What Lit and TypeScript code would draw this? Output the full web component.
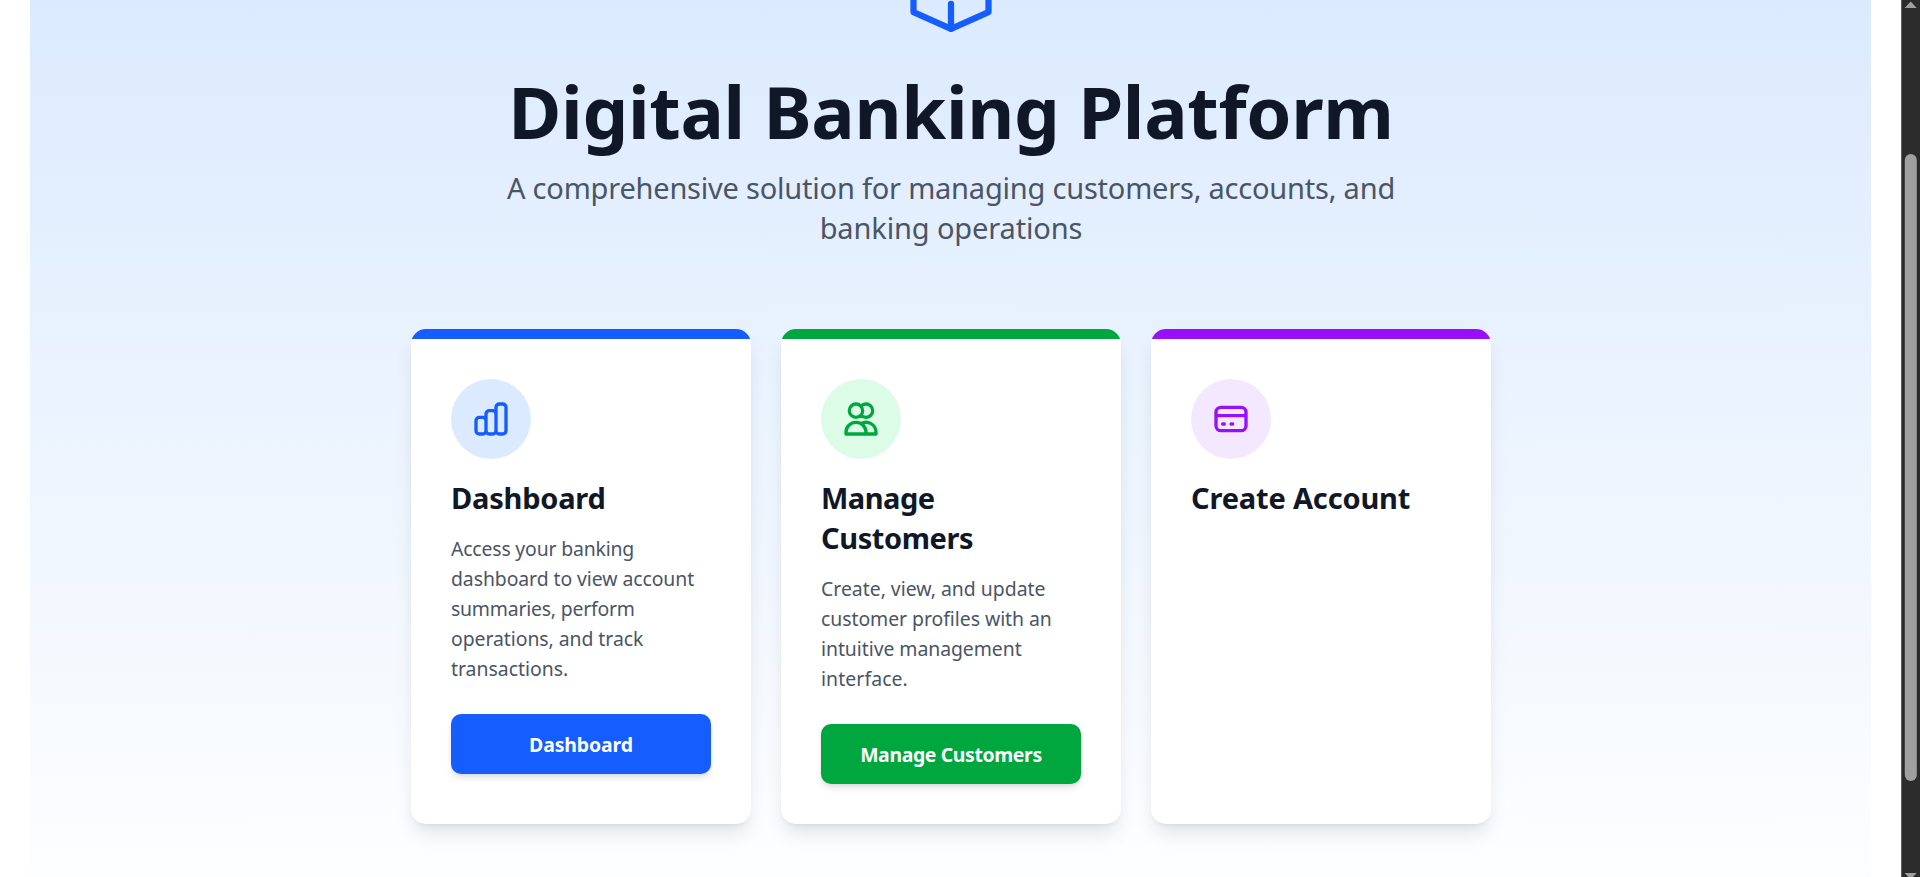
import { LitElement, html, css, svg } from 'lit';
import { customElement, property } from 'lit/decorators.js';

type Line = [text: string, spacing?: number];

interface Feature {
  tone: string;
  icon: string;
  title: Line[];
  body: Line[];
  action?: Line;
}

const ICONS: Record<string, string> = {
  chart:
    'M9 19v-6a2 2 0 00-2-2H5a2 2 0 00-2 2v6a2 2 0 002 2h2a2 2 0 002-2zm0 0V9a2 2 0 012-2h2a2 2 0 012 2v10m-6 0a2 2 0 002 2h2a2 2 0 002-2m0 0V5a2 2 0 012-2h2a2 2 0 012 2v14a2 2 0 01-2 2h-2a2 2 0 01-2-2z',
  users:
    'M12 4.354a4 4 0 110 5.292M15 21H3v-1a6 6 0 0112 0v1zm0 0h6v-1a6 6 0 00-9-5.197M13 7a4 4 0 11-8 0 4 4 0 018 0z',
  card: 'M3 10h18M7 15h1m4 0h1m-7 4h12a3 3 0 003-3V8a3 3 0 00-3-3H6a3 3 0 00-3 3v8a3 3 0 003 3z',
};

const FEATURES: Feature[] = [
  {
    tone: 'blue',
    icon: 'chart',
    title: [['Dashboard', -0.22]],
    body: [
      ['Access your banking', -0.17],
      ['dashboard to view account', -0.07],
      ['summaries, perform', -0.2],
      ['operations, and track', -0.05],
      ['transactions.'],
    ],
    action: ['Dashboard', -0.1],
  },
  {
    tone: 'green',
    icon: 'users',
    title: [['Manage', -0.5], ['Customers', -0.4]],
    body: [
      ['Create, view, and update'],
      ['customer profiles with an', -0.04],
      ['intuitive management', -0.05],
      ['interface.', 0.1],
    ],
    action: ['Manage Customers', -0.35],
  },
  {
    tone: 'purple',
    icon: 'card',
    title: [['Create Account', -0.17]],
    body: [],
  },
];

const line = ([text, spacing = 0]: Line) =>
  html`<span class="line" style="letter-spacing:${spacing}px">${text}</span>`;

@customElement('feature-card')
class FeatureCard extends LitElement {
  @property({ attribute: false }) feature!: Feature;

  static styles = css`
    :host { display: block; }
    .card {
      box-sizing: border-box;
      height: 100%;
      background: #fff;
      border-radius: 15px;
      overflow: hidden;
      box-shadow: 0 12.5px 18.75px -3.75px rgb(0 0 0 / 0.1), 0 5px 7.5px -5px rgb(0 0 0 / 0.1);
    }
    .blue { --main: #155dfc; --soft: #dbeafe; }
    .green { --main: #00a63e; --soft: #dcfce7; }
    .purple { --main: #9810fa; --soft: #f3e8ff; }
    .bar { height: 10px; background: var(--main); }
    .content { padding: 40px; }
    .badge {
      width: 80px;
      height: 80px;
      border-radius: 50%;
      background: var(--soft);
      color: var(--main);
      display: flex;
      align-items: center;
      justify-content: center;
      margin-bottom: 19px;
    }
    .badge svg { width: 40px; height: 40px; }
    .line { display: block; white-space: nowrap; }
    h2 { margin: 0; font-size: 29px; line-height: 40px; font-weight: 700; color: #101828; }
    p { margin: 16px 0 30px; font-size: 19.4px; line-height: 30px; color: #4a5565; }
    .action {
      height: 60px;
      border-radius: 10px;
      background: var(--main);
      color: #fff;
      font-size: 19.4px;
      font-weight: 700;
      display: flex;
      align-items: center;
      justify-content: center;
      box-shadow: 0 5px 7.5px -1.25px rgb(0 0 0 / 0.1), 0 2.5px 5px -2.5px rgb(0 0 0 / 0.1);
    }
  `;

  render() {
    const f = this.feature;
    return html`
      <article class="card ${f.tone}">
        <div class="bar"></div>
        <div class="content">
          <div class="badge">
            <svg viewBox="0 0 24 24" fill="none" stroke="currentColor" stroke-width="2" stroke-linecap="round" stroke-linejoin="round">
              ${svg`<path d=${ICONS[f.icon]}></path>`}
            </svg>
          </div>
          <h2>${f.title.map(line)}</h2>
          ${f.body.length ? html`<p>${f.body.map(line)}</p>` : ''}
          ${f.action ? html`<div class="action">${line(f.action)}</div>` : ''}
        </div>
      </article>
    `;
  }
}

@customElement('app-root')
class AppRoot extends LitElement {
  static styles = css`
    :host {
      display: flex;
      height: 877px;
      overflow: hidden;
      background: #fff;
      font-family: "Noto Sans", "Open Sans", sans-serif;
    }
    .page { flex: 1; padding: 0 30px; min-width: 0; }
    .hero {
      box-sizing: border-box;
      height: 877px;
      padding-left: 1px;
      display: flex;
      flex-direction: column;
      align-items: center;
      background: linear-gradient(to bottom, #dbeafe -20px, #fff 925px);
    }
    .logo { display: block; width: 100px; height: 44px; margin-bottom: 29px; }
    .line { display: block; white-space: nowrap; }
    h1 { margin: 0 0 20px; font-size: 72.5px; line-height: 75px; font-weight: 700; color: #101828; }
    .lead { margin: 0 0 81px; font-size: 29px; line-height: 40px; color: #4a5565; text-align: center; }
    .cards { display: grid; grid-template-columns: repeat(3, 340px); gap: 30px; height: 495px; }
    .scrollbar {
      box-sizing: border-box;
      width: 19px;
      height: 877px;
      border-left: 1px solid #5f5f5f;
      background: #2c2c2c;
    }
    .scrollbar svg { display: block; }
  `;

  render() {
    return html`
      <main class="page">
        <section class="hero">
          <svg class="logo" viewBox="0 0 100 44" fill="none" stroke="#155dfc" stroke-width="6.25" stroke-linecap="round" stroke-linejoin="round">
            <path d="M12.5 -20V12.2L50 28.9L87.5 12.2V-20M50 28.9V3.8"></path>
          </svg>
          <h1>${line(['Digital Banking Platform', -0.31])}</h1>
          <p class="lead">
            ${line(['A comprehensive solution for managing customers, accounts, and', -0.21])}
            ${line(['banking operations', -0.13])}
          </p>
          <div class="cards">
            ${FEATURES.map((f) => html`<feature-card .feature=${f}></feature-card>`)}
          </div>
        </section>
      </main>
      <div class="scrollbar">
        <svg width="18" height="877" viewBox="0 0 18 877" fill="#a0a0a0">
          <path d="M2.7 8L8.7 1.6L14.7 8Z"></path>
          <rect x="2.8" y="154" width="12" height="627" rx="6"></rect>
          <path d="M2.7 873L8.7 879.4L14.7 873Z"></path>
        </svg>
      </div>
    `;
  }
}
